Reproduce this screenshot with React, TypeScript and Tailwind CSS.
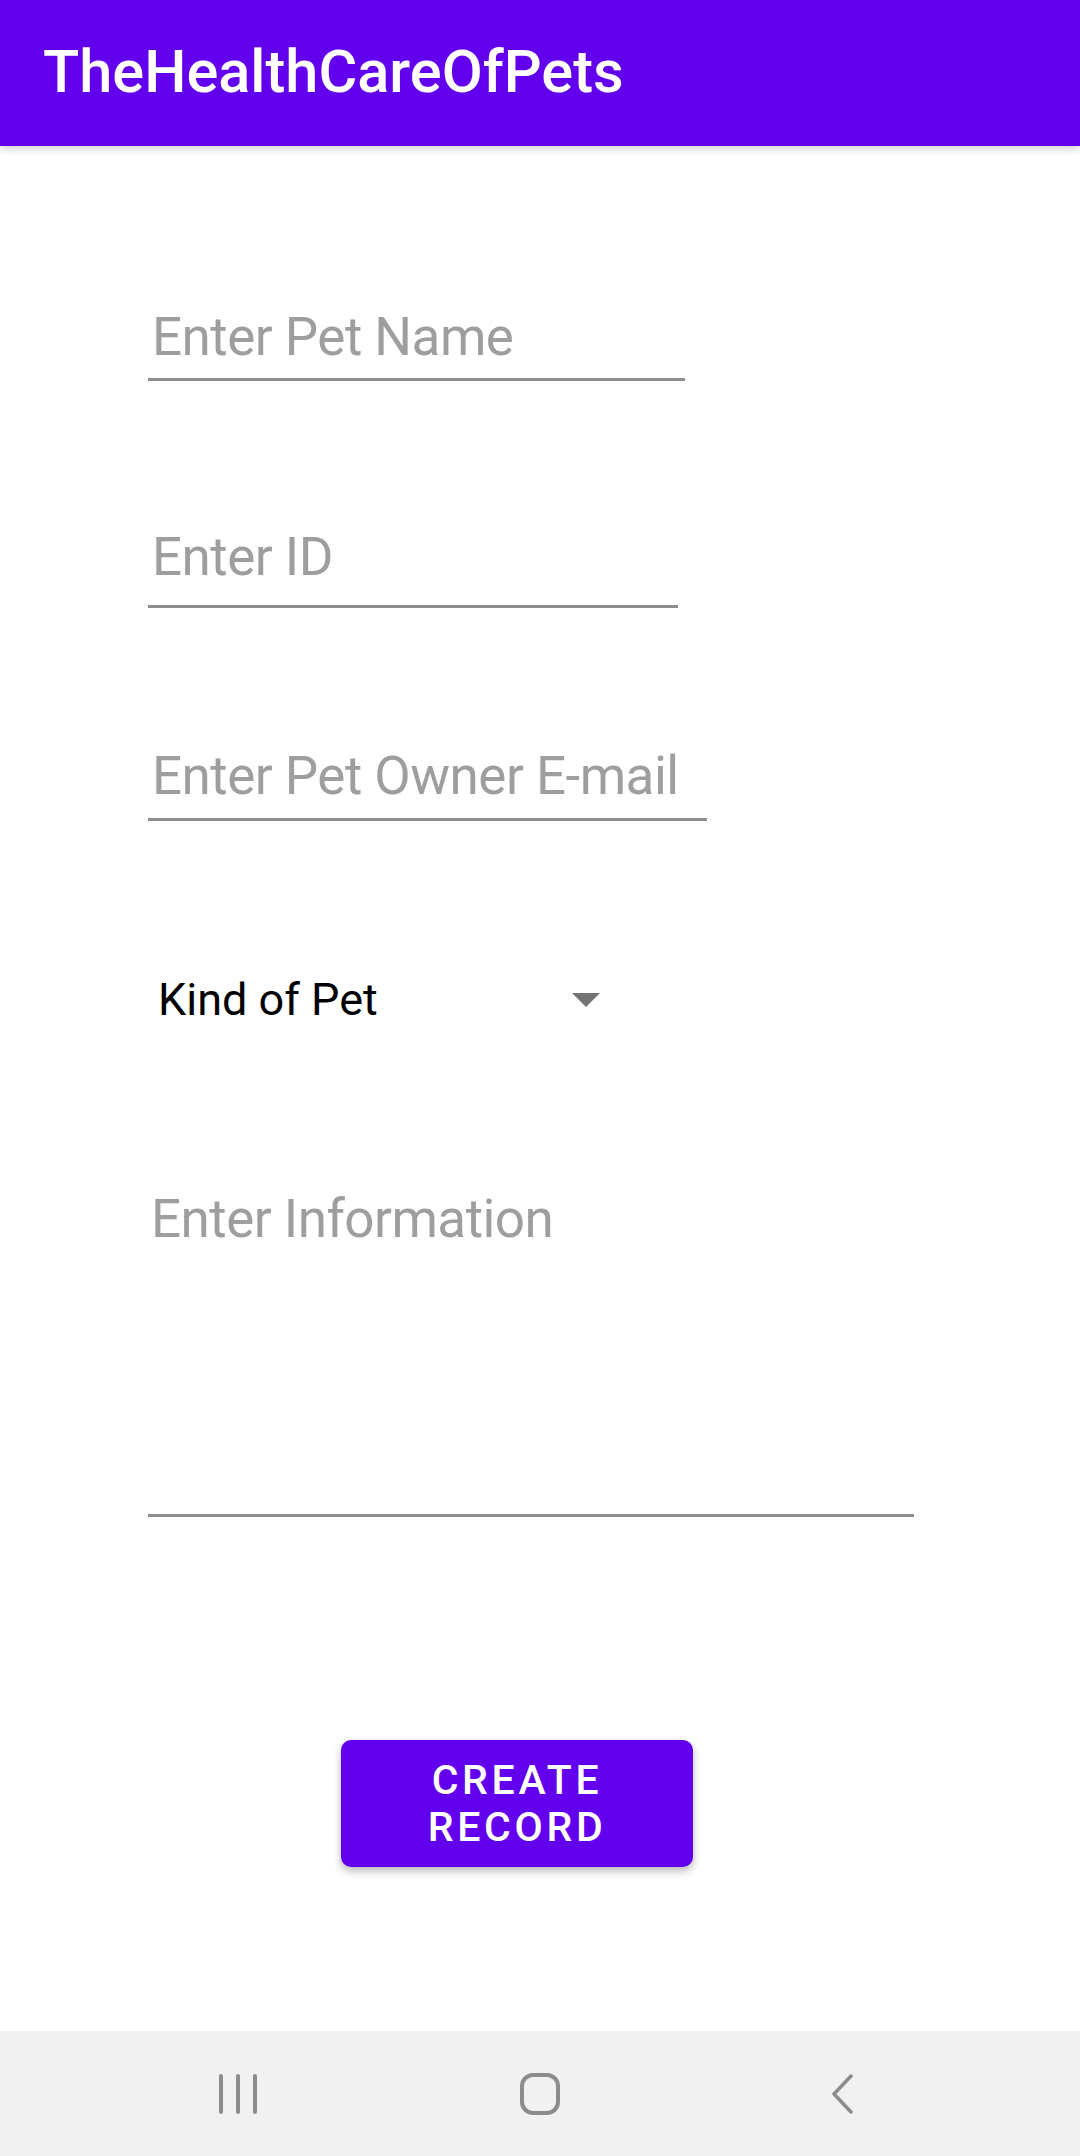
import React from "react";

const roboto = { fontFamily: "Roboto, 'Noto Sans', sans-serif" };

function HintField({
  label,
  width,
  className = "",
}: {
  label: string;
  width: string;
  className?: string;
}) {
  return (
    <div className={`${width} border-b-[3px] border-[#8e8e8e] ${className}`}>
      <div className="pl-[4px] text-[53px] leading-[61px] tracking-[-0.01em] text-[#9e9e9e]">
        {label}
      </div>
    </div>
  );
}

export default function App() {
  return (
    <div className="flex h-[2156px] flex-col bg-white" style={roboto}>
      {/* toolbar */}
      <header className="relative z-10 flex h-[146px] shrink-0 items-center bg-[#6200ee] pl-[43px] shadow-[0_3px_8px_rgba(0,0,0,0.18)]">
        <h1 className="text-[59.5px] font-medium leading-none text-white">TheHealthCareOfPets</h1>
      </header>

      <main className="flex flex-col items-start pl-[148px]">
        <HintField label="Enter Pet Name" width="w-[537px]" className="mt-[161px] pb-[10px]" />
        <HintField label="Enter ID" width="w-[530px]" className="mt-[146px] pb-[17px]" />
        <HintField label="Enter Pet Owner E-mail" width="w-[559px]" className="mt-[138px] pb-[11px]" />

        {/* spinner */}
        <div className="mt-[152px] flex w-[470px] items-center">
          <span className="pl-[10px] text-[45px] leading-[53px] text-black">Kind of Pet</span>
          <span className="ml-auto mr-[18px] h-0 w-0 border-x-[14px] border-t-[14px] border-x-transparent border-t-[#757575]" />
        </div>

        {/* multi-line info */}
        <div className="mt-[160px] h-[331px] w-[766px] border-b-[3px] border-[#8e8e8e] pt-[3px]">
          <div className="pl-[3px] text-[53px] leading-[61px] tracking-[-0.01em] text-[#9e9e9e]">
            Enter Information
          </div>
        </div>

        <button className="ml-[193px] mt-[223px] flex h-[127px] w-[352px] flex-col items-center justify-center rounded-[10px] bg-[#6200ee] text-[41px] font-medium uppercase leading-[47px] tracking-[0.09em] text-white shadow-[0_4px_8px_rgba(0,0,0,0.28)]">
          <span>Create</span>
          <span>Record</span>
        </button>
      </main>

      {/* system navigation bar */}
      <nav className="mt-auto grid h-[125px] shrink-0 grid-cols-[302px_302px_302px] items-center justify-center bg-[#f1f1f1]">
        <div className="flex justify-center gap-[13px]">
          <span className="h-[40px] w-[4px] rounded-full bg-[#8c8c8c]" />
          <span className="h-[40px] w-[4px] rounded-full bg-[#8c8c8c]" />
          <span className="h-[40px] w-[4px] rounded-full bg-[#8c8c8c]" />
        </div>
        <div className="flex justify-center">
          <span className="h-[42px] w-[40px] rounded-[13px] border-[4px] border-[#8c8c8c]" />
        </div>
        <div className="flex justify-center">
          <svg width="26" height="40" viewBox="0 0 26 40" fill="none">
            <path d="M22 2 L5 20 L22 38" stroke="#8c8c8c" strokeWidth="3.5" strokeLinecap="round" strokeLinejoin="round" />
          </svg>
        </div>
      </nav>
    </div>
  );
}
